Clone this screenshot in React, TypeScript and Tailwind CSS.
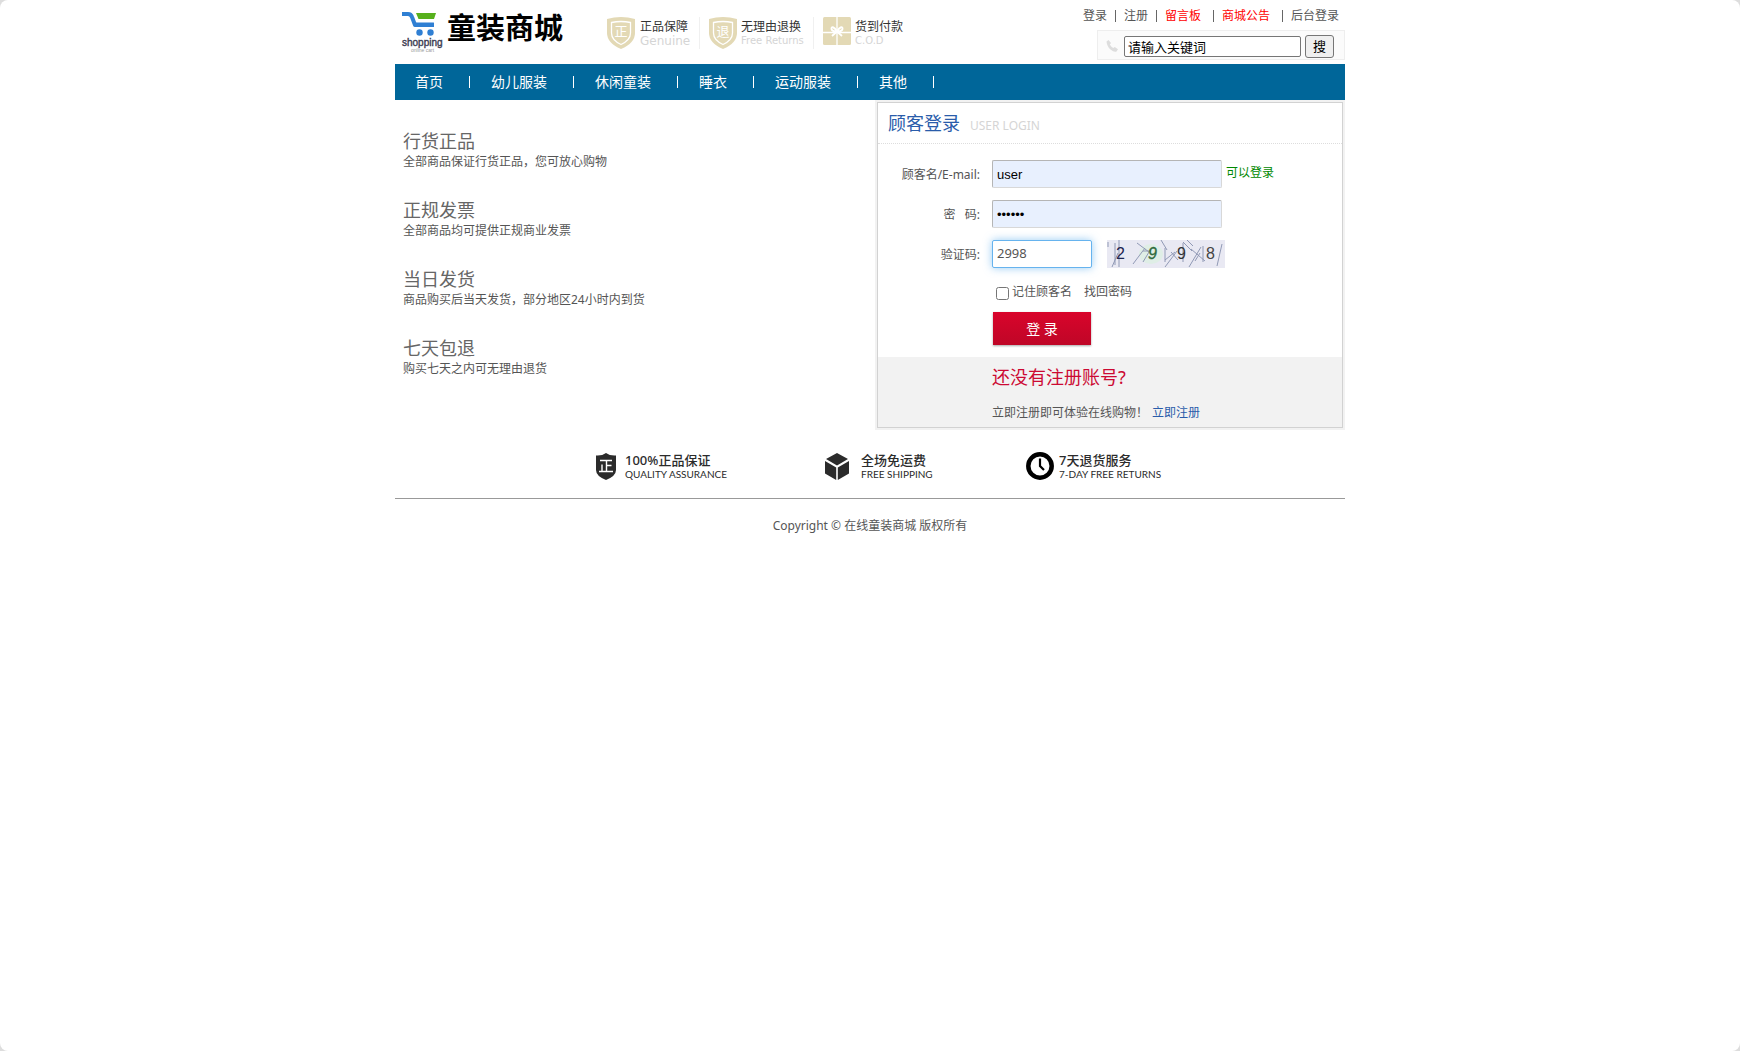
import { useState } from 'react';

const NAV_ITEMS = ['首页', '幼儿服装', '休闲童装', '睡衣', '运动服装', '其他'];

const TOP_LINKS = [
  { label: '登录', className: 'mr-2', barClass: 'mr-2' },
  { label: '注册', className: 'mr-2', barClass: 'mr-2' },
  { label: '留言板', className: 'mr-3 text-[#ff0000]', barClass: 'mr-2' },
  { label: '商城公告', className: 'mr-3 text-[#ff0000]', barClass: 'mr-2' },
  { label: '后台登录', className: '', barClass: '' },
];

const PROMISES = [
  { title: '行货正品', text: '全部商品保证行货正品，您可放心购物' },
  { title: '正规发票', text: '全部商品均可提供正规商业发票' },
  { title: '当日发货', text: '商品购买后当天发货，部分地区24小时内到货' },
  { title: '七天包退', text: '购买七天之内可无理由退货' },
];

function CartLogo() {
  return (
    <svg viewBox="0 0 46 42" className="h-[42px] w-[46px] shrink-0" aria-label="shopping online cart">
      <path d="M1 3h6q3 0 4 3l3 8h19" fill="none" stroke="#2f7fd3" strokeWidth="4" strokeLinejoin="round" />
      <path d="M15 2h20l-2 6h-15.500z" fill="#57b01c" />
      <path d="M12 11.500h21l-1.500 4.500h-17z" fill="#2f7fd3" />
      <circle cx="18.500" cy="21.500" r="3.200" fill="#2f7fd3" />
      <circle cx="29.500" cy="21.500" r="3.200" fill="#2f7fd3" />
      <text
        x="1"
        y="35"
        fontSize="10"
        fill="#3d3d52"
        stroke="#3d3d52"
        strokeWidth="0.400"
        className="font-['Liberation_Sans']"
      >
        shopping
      </text>
      <text x="10" y="41" fontSize="5" fill="#999999" className="font-['Liberation_Sans']">
        online cart
      </text>
    </svg>
  );
}

function Shield({ char }: { char: string }) {
  return (
    <svg viewBox="0 0 28 32" className="h-8 w-7 shrink-0" aria-hidden="true">
      <path d="M0 2Q7 0 14 0t14 2v14q0 10-14 16Q0 26 0 16z" fill="#e3d9b5" />
      <path d="M4.500 5.500q9.500-2 19 0V16q0 7-9.500 11.500Q4.500 23 4.500 16z" fill="none" stroke="#fff" strokeWidth="1.300" />
      <text x="14" y="19" fontSize="13" textAnchor="middle" fill="#fff">
        {char}
      </text>
    </svg>
  );
}

function Gift() {
  return (
    <svg viewBox="0 0 28 28" className="h-7 w-7 shrink-0" aria-hidden="true">
      <rect width="28" height="28" rx="1.500" fill="#e3d9b5" />
      <path d="M14 0v28M0 15.500h28" stroke="#fff" strokeWidth="1.300" />
      <path
        d="M14 14.500C11 9 8 9.500 8.500 12s3 2.500 5.500 2.500c3-5.500 6-5 5.500-2.500s-3 2.500-5.500 2.500l-5 4.500M14 14.500l5 4.500"
        fill="none"
        stroke="#fff"
        strokeWidth="1.800"
      />
    </svg>
  );
}

function Phone() {
  return (
    <svg viewBox="0 0 12 12" className="h-3 w-3 shrink-0" aria-hidden="true">
      <path
        d="M.5 1.500 2.500 0 5 3 3.800 4.600q1.200 2.200 3.400 3.300L8.800 7 12 9.200 10.500 11.500Q8 12.500 4.500 9.500T.5 1.500z"
        fill="#dddddd"
      />
    </svg>
  );
}

function DarkShield() {
  return (
    <svg viewBox="0 0 20 27" className="h-[27px] w-5 shrink-0" aria-hidden="true">
      <path d="M0 2.500Q6 3 10 0q4 3 10 2.500V17q0 6-10 10Q0 23 0 17z" fill="#2b2b2b" />
      <path d="M4 7.500h12M3 18.500h14M10.500 7.500v11M10.500 12.500h5M6 11.500v7" stroke="#fff" strokeWidth="1.400" />
    </svg>
  );
}

function Cube() {
  return (
    <svg viewBox="0 0 24 27" className="h-[27px] w-6 shrink-0" aria-hidden="true">
      <path d="M12 0l11 6-11 6.500L1 6zM0 8l11.200 6.500V27L0 20.500zM24 8l-11.200 6.500V27L24 20.500z" fill="#2b2b2b" />
    </svg>
  );
}

function Clock() {
  return (
    <svg viewBox="0 0 28 28" className="h-7 w-7 shrink-0" aria-hidden="true">
      <circle cx="14" cy="14" r="11.700" fill="#fff" stroke="#000" strokeWidth="4.500" />
      <path d="M14 6.500v7.500l4 4" fill="none" stroke="#000" strokeWidth="2.200" />
    </svg>
  );
}

function Captcha() {
  return (
    <svg viewBox="0 0 118 28" className="ml-[15px] h-7 w-[118px]" role="img" aria-label="验证码图片">
      <rect width="118" height="28" fill="#e9e9f3" />
      <ellipse cx="44" cy="14" rx="12" ry="10" fill="#dfeee6" />
      <path
        d="M1 2v5M8 3v22M12 0v27M5 27l6-14M26 24l12-16M30 3l12 9M36 11h8M36 22l6-10M58 8v14M54 0l6 10M64 12l7 8M58 20l10-8M58 27l12-16M76 3v19M76 2l9 9M80 0l6 6M82 27l12-20M88 21l5-8M84 9l14 12M96 6v16M110 26l5-22"
        fill="none"
        stroke="#9099b5"
        strokeWidth="1"
      />
      <g fontSize="16" className="font-['Liberation_Sans']">
        <text x="9" y="19" fill="#1d2550">2</text>
        <text x="41" y="19" fill="#2f6b3c" fontStyle="italic" stroke="#2f6b3c" strokeWidth="0.400">9</text>
        <text x="70" y="19" fill="#333333">9</text>
        <text x="99" y="19" fill="#444444">8</text>
      </g>
    </svg>
  );
}

function Header() {
  return (
    <header className="flex h-16 justify-between">
      <div className="flex">
        <a href="#" className="flex pt-[11px] pl-[6px]">
          <CartLogo />
          <span className="text-[29px] leading-[34px] font-bold text-black">童装商城</span>
        </a>
        <ul className="ml-11 flex pt-[17px] text-[#333]">
          <li className="flex h-8 border-r border-[#f0f0f0] pr-[9px]">
            <Shield char="正" />
            <div className="ml-[5px] w-[50px]">
              <p className="leading-5">正品保障</p>
              <p className="font-['DejaVu_Sans'] leading-2 text-[#d5d5d5]">Genuine</p>
            </div>
          </li>
          <li className="ml-[9px] flex h-8 border-r border-[#f0f0f0] pr-[7px]">
            <Shield char="退" />
            <div className="ml-1 w-[65px] whitespace-nowrap">
              <p className="leading-5">无理由退换</p>
              <p className="font-['DejaVu_Sans'] text-[10px] leading-2 text-[#d5d5d5]">Free Returns</p>
            </div>
          </li>
          <li className="ml-[9px] flex h-8">
            <Gift />
            <div className="ml-1">
              <p className="leading-5">货到付款</p>
              <p className="font-['DejaVu_Sans'] text-[10px] leading-2 text-[#d5d5d5]">C.O.D</p>
            </div>
          </li>
        </ul>
      </div>
      <div className="flex flex-col items-end">
        <nav className="flex h-[30px] items-center pt-0.5 pr-[6px]">
          {TOP_LINKS.map((link, i) => (
            <span key={link.label} className="flex items-center">
              <a href="#" className={link.className}>
                {link.label}
              </a>
              {i < TOP_LINKS.length - 1 && <i className={`h-3 w-px bg-[#666] ${link.barClass}`} />}
            </span>
          ))}
        </nav>
        <form
          className="flex h-[30px] w-[248px] items-center border border-[#eeeeee] bg-[#fbfbfb] pt-0.5 pl-2"
          onSubmit={(e) => e.preventDefault()}
        >
          <Phone />
          <input
            aria-label="搜索"
            defaultValue="请输入关键词"
            className="ml-[6px] h-[21px] w-[177px] rounded-xs border border-[#767676] bg-white px-[3px] text-[13px] text-black outline-none"
          />
          <button className="ml-1 h-[23px] w-[29px] rounded-[3px] border border-[#767676] bg-[#efefef] text-[13px] leading-5 text-black">
            搜
          </button>
        </form>
      </div>
    </header>
  );
}

function NavBar() {
  return (
    <nav className="flex h-9 items-center bg-[#006699] text-sm text-white">
      {NAV_ITEMS.map((item) => (
        <div key={item} className="flex items-center">
          <a href="#" className="px-5">
            {item}
          </a>
          <i className="mr-px ml-[6px] h-3 w-px bg-white" />
        </div>
      ))}
    </nav>
  );
}

function LoginPanel() {
  const [user, setUser] = useState('user');
  const [password, setPassword] = useState('123456');
  const [code, setCode] = useState('2998');
  const [remember, setRemember] = useState(false);

  return (
    <section className="w-[470px] border-2 border-[#f2f2f2]">
      <div className="border border-[#d2d2d2]">
        <div className="flex h-[41px] items-center border-b border-dotted border-[#dddddd] pl-[10px]">
          <h2 className="text-lg text-[#2a5caa]">顾客登录</h2>
          <span className="ml-[10px] pt-1.5 text-[#d5d5d5]">USER LOGIN</span>
        </div>
        <form className="pb-3" onSubmit={(e) => e.preventDefault()}>
          <div className="space-y-3 pt-4">
            <div className="flex h-7 items-center">
              <label htmlFor="user" className="w-[102px] pt-0.5 text-right">
                顾客名/E-mail:
              </label>
              <input
                id="user"
                value={user}
                onChange={(e) => setUser(e.target.value)}
                className="ml-3 h-7 w-[230px] rounded-xs border border-[#d8d8d8] border-t-[#b5b5b5] border-l-[#b5b5b5] bg-[#e8f0fe] px-1 font-['Liberation_Sans'] text-[13px] text-black outline-none"
              />
              <span className="ml-1 pb-0.5 text-[#008800]">可以登录</span>
            </div>
            <div className="flex h-7 items-center">
              <label htmlFor="password" className="w-[102px] pt-0.5 text-right whitespace-pre">
                密{'  '} 码:
              </label>
              <input
                id="password"
                type="password"
                value={password}
                onChange={(e) => setPassword(e.target.value)}
                className="ml-3 h-7 w-[230px] rounded-xs border border-[#d8d8d8] border-t-[#b5b5b5] border-l-[#b5b5b5] bg-[#e8f0fe] px-1 font-['Liberation_Sans'] text-[13px] text-black outline-none"
              />
            </div>
            <div className="flex h-7 items-center">
              <label htmlFor="code" className="w-[102px] pt-0.5 text-right">
                验证码:
              </label>
              <input
                id="code"
                autoFocus
                value={code}
                onChange={(e) => setCode(e.target.value)}
                className="ml-3 h-7 w-[100px] rounded-xs border border-[#66b3ee] bg-white px-1 pb-0.5 text-[13px] shadow-[0_0_8px_rgba(82,168,236,0.6)] outline-none"
              />
              <Captcha />
            </div>
          </div>
          <div className="ml-[118px] flex h-11 items-center pt-1">
            <input
              id="remember"
              type="checkbox"
              checked={remember}
              onChange={(e) => setRemember(e.target.checked)}
              className="mt-[2px] size-[13px]"
            />
            <label htmlFor="remember" className="ml-[3px]">
              记住顾客名
            </label>
            <a href="#" className="ml-3">
              找回密码
            </a>
          </div>
          <button className="ml-[115px] block h-[33px] w-[98px] bg-linear-to-b from-[#d9042b] to-[#bf0627] text-sm text-white shadow-[0_1px_2px_rgba(0,0,0,0.35)]">
            登 录
          </button>
        </form>
        <div className="h-[70px] bg-[#f2f2f2] pt-[6px] pl-[114px]">
          <h3 className="text-lg leading-7 text-[#cc0a33]">还没有注册账号?</h3>
          <p className="mt-[14px] leading-4">
            立即注册即可体验在线购物！
            <a href="#" className="ml-1 text-[#2a5caa]">
              立即注册
            </a>
          </p>
        </div>
      </div>
    </section>
  );
}

export default function App() {
  return (
    <div className="bg-[#dddddd] font-['Noto_Sans','Noto_Sans_CJK_SC',sans-serif] text-xs text-[#555]">
      <div className="min-h-screen rounded-lg bg-white">
        <div className="mx-auto max-w-[950px]">
          <Header />
          <NavBar />

          <main className="flex justify-between">
            <ul className="space-y-7 pt-[29px] pl-2">
              {PROMISES.map((item) => (
                <li key={item.title}>
                  <h3 className="text-lg leading-6 text-[#666]">{item.title}</h3>
                  <p className="leading-[17px]">{item.text}</p>
                </li>
              ))}
            </ul>
            <LoginPanel />
          </main>

          <ul className="flex h-[69px] items-center border-b border-[#999] pt-1 pl-[201px] text-[#2b2b2b]">
            <li className="flex w-[229px] items-center gap-[9px]">
              <DarkShield />
              <div>
                <p className="text-[13px] leading-4 font-medium">100%正品保证</p>
                <p className="font-['Lato'] text-[10px] leading-3">QUALITY ASSURANCE</p>
              </div>
            </li>
            <li className="flex w-[201px] items-center gap-3">
              <Cube />
              <div>
                <p className="text-[13px] leading-4 font-medium">全场免运费</p>
                <p className="font-['Lato'] text-[10px] leading-3">FREE SHIPPING</p>
              </div>
            </li>
            <li className="flex items-center gap-[5px]">
              <Clock />
              <div>
                <p className="text-[13px] leading-4 font-medium">7天退货服务</p>
                <p className="font-['Lato'] text-[10px] leading-3">7-DAY FREE RETURNS</p>
              </div>
            </li>
          </ul>
          <footer className="pt-[19px] text-center leading-4">Copyright © 在线童装商城 版权所有</footer>
        </div>
      </div>
    </div>
  );
}
